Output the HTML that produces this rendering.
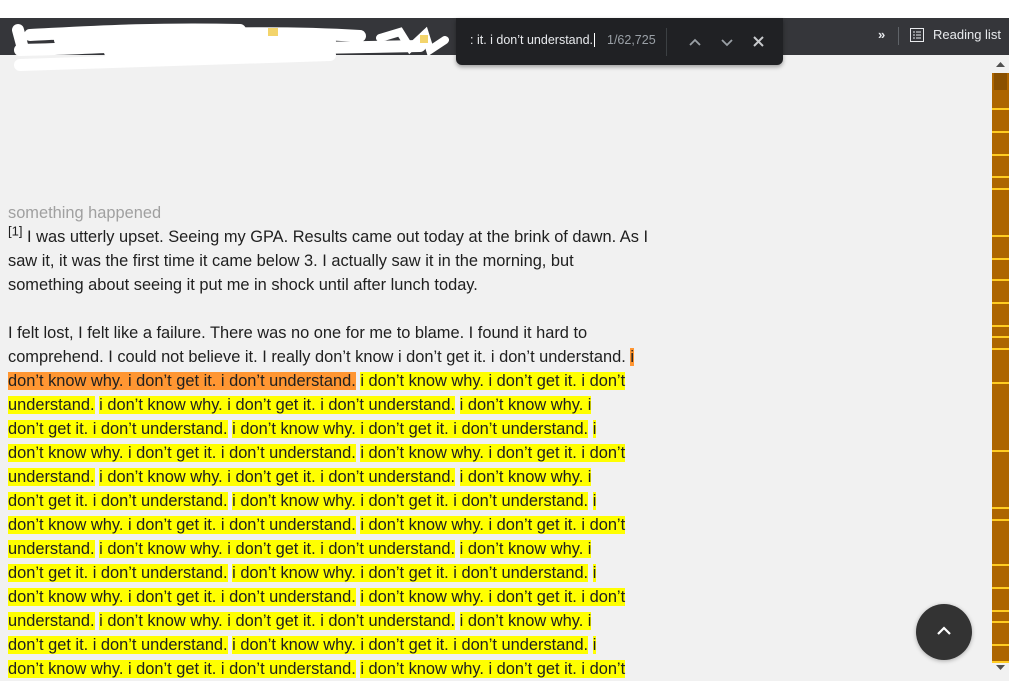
<!DOCTYPE html>
<html><head><style>
body{margin:0;width:1009px;height:673px;overflow:hidden;background:#f1f1f1;position:relative;font-family:"Segoe UI","Liberation Sans",sans-serif;}
.top{position:absolute;left:0;top:0;width:1009px;height:18px;background:#fff}
.bar{position:absolute;left:0;top:18px;width:1009px;height:37px;background:#35363a}
.find{position:absolute;left:456px;top:18px;width:327px;height:47px;background:#202124;border-radius:0 0 6px 6px;box-shadow:0 2px 4px rgba(0,0,0,.35);color:#e8eaed;font-size:12.5px}
.txt{position:absolute;left:8px;width:640px;font-size:16.4px;color:#202020;white-space:nowrap;line-height:24px}
.y{background:#ffff00}.o{background:#ff9632}
.sb{position:absolute;left:992px;top:55px;width:17px;height:618px;background:#f1f1f1}
.track{position:absolute;left:992px;top:73px;width:17px;height:590px;background:#ad6500}
.ln{position:absolute;left:992px;width:17px;height:2px;background:#ffcc22}
</style></head><body>
<div class="top"></div>
<div class="bar"></div>
<svg style="position:absolute;left:0;top:10px" width="460" height="70">
<path d="M18 20 L22 35 M30 25 C90 22 150 18 240 20 M20 40 C120 38 200 30 330 32 M60 30 C160 25 260 20 360 26 M20 55 C120 52 220 48 330 45 M110 42 C220 40 300 38 420 36" stroke="#fff" stroke-width="12" fill="none" stroke-linecap="round"/>
<path d="M380 28 L400 22 L410 38 L425 24 L430 40 L445 30" stroke="#fff" stroke-width="8" fill="none" stroke-linecap="round"/>
<rect x="268" y="18" width="10" height="8" fill="#f3d46b"/><rect x="420" y="25" width="8" height="8" fill="#f3d46b"/>
</svg>
<div class="find">
<div style="position:absolute;left:14px;top:15px">: it. i don’t understand.<span style="border-left:1px solid #fff;margin-left:1px"></span></div>
<div style="position:absolute;left:151px;top:15px;color:#9aa0a6">1/62,725</div>
<div style="position:absolute;left:210px;top:10px;width:1px;height:28px;background:#3c4043"></div>
<svg style="position:absolute;left:230px;top:17px" width="80" height="14"><path d="M4 10 L9 5 L14 10" stroke="#9aa0a6" stroke-width="1.8" fill="none"/><path d="M36 5 L41 10 L46 5" stroke="#9aa0a6" stroke-width="1.8" fill="none"/><path d="M68 2 L77 11 M77 2 L68 11" stroke="#c8cacd" stroke-width="2" fill="none"/></svg>
</div>
<div style="position:absolute;left:878px;top:27px;color:#e8eaed;font-size:13px;font-weight:bold">»</div>
<div style="position:absolute;left:898px;top:27px;width:1px;height:18px;background:#5f6368"></div>
<svg style="position:absolute;left:910px;top:28px" width="14" height="14"><rect x="0.5" y="0.5" width="13" height="13" fill="none" stroke="#e8eaed"/><path d="M3 4h2M6 4h5M3 7h2M6 7h5M3 10h2M6 10h5" stroke="#e8eaed"/></svg>
<div style="position:absolute;left:933px;top:27px;color:#e8eaed;font-size:13px">Reading list</div>

<div class="txt" style="top:201px;color:#a0a0a0">something happened</div>
<div class="txt" style="top:225px"><sup style="font-size:13px;line-height:0">[1]</sup> I was utterly upset. Seeing my GPA. Results came out today at the brink of dawn. As I</div>
<div class="txt" style="top:249px">saw it, it was the first time it came below 3. I actually saw it in the morning, but</div>
<div class="txt" style="top:273px">something about seeing it put me in shock until after lunch today.</div>
<div class="txt" style="top:321px">I felt lost, I felt like a failure. There was no one for me to blame. I found it hard to</div>
<div class="txt" style="top:345px">comprehend. I could not believe it. I really don’t know i don’t get it. i don’t understand. <span class="o">i</span></div>
<div class="txt" style="top:369px"><span class="o">don’t know why. i don’t get it. i don’t understand.</span> <span class="y">i don’t know why. i don’t get it. i don’t</span></div>
<div class="txt" style="top:393px"><span class="y">understand.</span> <span class="y">i don’t know why. i don’t get it. i don’t understand.</span> <span class="y">i don’t know why. i</span></div>
<div class="txt" style="top:417px"><span class="y">don’t get it. i don’t understand.</span> <span class="y">i don’t know why. i don’t get it. i don’t understand.</span> <span class="y">i</span></div>
<div class="txt" style="top:441px"><span class="y">don’t know why. i don’t get it. i don’t understand.</span> <span class="y">i don’t know why. i don’t get it. i don’t</span></div>
<div class="txt" style="top:465px"><span class="y">understand.</span> <span class="y">i don’t know why. i don’t get it. i don’t understand.</span> <span class="y">i don’t know why. i</span></div>
<div class="txt" style="top:489px"><span class="y">don’t get it. i don’t understand.</span> <span class="y">i don’t know why. i don’t get it. i don’t understand.</span> <span class="y">i</span></div>
<div class="txt" style="top:513px"><span class="y">don’t know why. i don’t get it. i don’t understand.</span> <span class="y">i don’t know why. i don’t get it. i don’t</span></div>
<div class="txt" style="top:537px"><span class="y">understand.</span> <span class="y">i don’t know why. i don’t get it. i don’t understand.</span> <span class="y">i don’t know why. i</span></div>
<div class="txt" style="top:561px"><span class="y">don’t get it. i don’t understand.</span> <span class="y">i don’t know why. i don’t get it. i don’t understand.</span> <span class="y">i</span></div>
<div class="txt" style="top:585px"><span class="y">don’t know why. i don’t get it. i don’t understand.</span> <span class="y">i don’t know why. i don’t get it. i don’t</span></div>
<div class="txt" style="top:609px"><span class="y">understand.</span> <span class="y">i don’t know why. i don’t get it. i don’t understand.</span> <span class="y">i don’t know why. i</span></div>
<div class="txt" style="top:633px"><span class="y">don’t get it. i don’t understand.</span> <span class="y">i don’t know why. i don’t get it. i don’t understand.</span> <span class="y">i</span></div>
<div class="txt" style="top:657px"><span class="y">don’t know why. i don’t get it. i don’t understand.</span> <span class="y">i don’t know why. i don’t get it. i don’t</span></div>

<div class="sb"></div>
<div class="track"></div>
<div style="position:absolute;left:994px;top:73px;width:13px;height:17px;background:#8a5000"></div>
<svg style="position:absolute;left:992px;top:58px" width="17" height="12"><path d="M4 9 L8.5 4 L13 9Z" fill="#505050"/></svg>
<svg style="position:absolute;left:992px;top:663px" width="17" height="10"><path d="M4 2 L8.5 7 L13 2Z" fill="#505050"/></svg>
<div class="ln" style="top:108px"></div><div class="ln" style="top:131px"></div><div class="ln" style="top:154px"></div><div class="ln" style="top:176px"></div><div class="ln" style="top:188px"></div><div class="ln" style="top:235px"></div><div class="ln" style="top:258px"></div><div class="ln" style="top:279px"></div><div class="ln" style="top:302px"></div><div class="ln" style="top:325px"></div><div class="ln" style="top:336px"></div><div class="ln" style="top:348px"></div><div class="ln" style="top:382px"></div><div class="ln" style="top:450px"></div><div class="ln" style="top:507px"></div><div class="ln" style="top:519px"></div><div class="ln" style="top:564px"></div><div class="ln" style="top:587px"></div><div class="ln" style="top:610px"></div><div class="ln" style="top:621px"></div><div class="ln" style="top:644px"></div><div class="ln" style="top:661px"></div>
<div style="position:absolute;left:916px;top:604px;width:56px;height:56px;border-radius:50%;background:#333;box-shadow:0 1px 4px rgba(0,0,0,.3)"></div>
<svg style="position:absolute;left:934px;top:624px" width="20" height="14"><path d="M4 10 L10 4 L16 10" stroke="#fff" stroke-width="2.2" fill="none"/></svg>
</body></html>
